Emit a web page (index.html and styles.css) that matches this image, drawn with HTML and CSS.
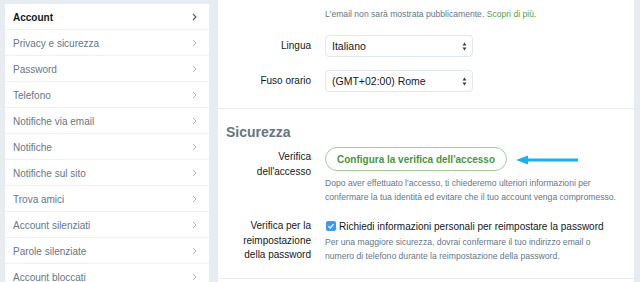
FILE: index.html
```html
<!DOCTYPE html>
<html lang="it">
<head>
    <meta charset="UTF-8">
    <meta name="viewport" content="width=device-width, initial-scale=1.0">
    <title>Impostazioni account</title>
    <link rel="stylesheet" href="styles.css">
</head>
<body>
    <div class="page">
        <nav class="menu">
            <a class="menu-item active" href="#">Account <svg class="chev" width="5" height="8" viewBox="0 0 5 8"><path d="M1 1l3 3-3 3" fill="none" stroke="currentColor" stroke-width="1.1"/></svg></a>
            <a class="menu-item" href="#">Privacy e sicurezza <svg class="chev" width="5" height="8" viewBox="0 0 5 8"><path d="M1 1l3 3-3 3" fill="none" stroke="currentColor" stroke-width="0.9"/></svg></a>
            <a class="menu-item" href="#">Password <svg class="chev" width="5" height="8" viewBox="0 0 5 8"><path d="M1 1l3 3-3 3" fill="none" stroke="currentColor" stroke-width="0.9"/></svg></a>
            <a class="menu-item" href="#">Telefono <svg class="chev" width="5" height="8" viewBox="0 0 5 8"><path d="M1 1l3 3-3 3" fill="none" stroke="currentColor" stroke-width="0.9"/></svg></a>
            <a class="menu-item" href="#">Notifiche via email <svg class="chev" width="5" height="8" viewBox="0 0 5 8"><path d="M1 1l3 3-3 3" fill="none" stroke="currentColor" stroke-width="0.9"/></svg></a>
            <a class="menu-item" href="#">Notifiche <svg class="chev" width="5" height="8" viewBox="0 0 5 8"><path d="M1 1l3 3-3 3" fill="none" stroke="currentColor" stroke-width="0.9"/></svg></a>
            <a class="menu-item" href="#">Notifiche sul sito <svg class="chev" width="5" height="8" viewBox="0 0 5 8"><path d="M1 1l3 3-3 3" fill="none" stroke="currentColor" stroke-width="0.9"/></svg></a>
            <a class="menu-item" href="#">Trova amici <svg class="chev" width="5" height="8" viewBox="0 0 5 8"><path d="M1 1l3 3-3 3" fill="none" stroke="currentColor" stroke-width="0.9"/></svg></a>
            <a class="menu-item" href="#">Account silenziati <svg class="chev" width="5" height="8" viewBox="0 0 5 8"><path d="M1 1l3 3-3 3" fill="none" stroke="currentColor" stroke-width="0.9"/></svg></a>
            <a class="menu-item" href="#">Parole silenziate <svg class="chev" width="5" height="8" viewBox="0 0 5 8"><path d="M1 1l3 3-3 3" fill="none" stroke="currentColor" stroke-width="0.9"/></svg></a>
            <a class="menu-item" href="#">Account bloccati <svg class="chev" width="5" height="8" viewBox="0 0 5 8"><path d="M1 1l3 3-3 3" fill="none" stroke="currentColor" stroke-width="0.9"/></svg></a>
        </nav>

        <main class="panel">
            <section class="section first">
                <div class="row">
                    <div></div>
                    <p class="note">L'email non sarà mostrata pubblicamente. <a href="#">Scopri di più.</a></p>
                </div>
                <div class="row middle lang">
                    <label class="label">Lingua</label>
                    <div class="select"><span>Italiano</span>
                        <svg width="5" height="9" viewBox="0 0 5 9"><path d="M2.5 0.5L4.5 3.5H0.5z M2.5 8.5L4.5 5.5H0.5z" fill="#3c3c3c"/></svg>
                    </div>
                </div>
                <div class="row middle zone">
                    <label class="label">Fuso orario</label>
                    <div class="select"><span>(GMT+02:00) Rome</span>
                        <svg width="5" height="9" viewBox="0 0 5 9"><path d="M2.5 0.5L4.5 3.5H0.5z M2.5 8.5L4.5 5.5H0.5z" fill="#3c3c3c"/></svg>
                    </div>
                </div>
            </section>

            <section class="section security">
                <h2>Sicurezza</h2>
                <div class="row">
                    <label class="label top">Verifica<br>dell'accesso</label>
                    <div>
                        <div class="btn-line">
                            <button class="btn-outline">Configura la verifica dell'accesso</button>
                            <svg class="arrow" width="62" height="10" viewBox="0 0 62 10"><path d="M0 5L12 0.5V3.6H62V6.4H12V9.5z" fill="#1cb0ee"/></svg>
                        </div>
                        <p class="help">Dopo aver effettuato l'accesso, ti chiederemo ulteriori informazioni per<br>confermare la tua identità ed evitare che il tuo account venga compromesso.</p>
                    </div>
                </div>
                <div class="row reset">
                    <label class="label">Verifica per la<br>reimpostazione<br>della password</label>
                    <div>
                        <div class="check-line">
                            <span class="check"><svg width="10" height="10" viewBox="0 0 10 10"><path d="M2.6 5.2l1.7 1.7 3.3-3.8" fill="none" stroke="#fff" stroke-width="1.4"/></svg></span>
                            <span>Richiedi informazioni personali per reimpostare la password</span>
                        </div>
                        <p class="help small">Per una maggiore sicurezza, dovrai confermare il tuo indirizzo email o<br>numero di telefono durante la reimpostazione della password.</p>
                    </div>
                </div>
            </section>

            <section class="section rest"></section>
        </main>
    </div>
</body>
</html>
```

FILE: styles.css
```css
body {
    margin: 0;
    background: #e6ecf0;
    font-family: "Liberation Sans", Arial, sans-serif;
    overflow: hidden;
}
.page {
    display: flex;
    align-items: flex-start;
    gap: 9px;
    padding-left: 5px;
}

/* left menu */
.menu {
    width: 204px;
    margin-top: 4px;
    background: #fff;
}
.menu-item {
    display: flex;
    justify-content: space-between;
    align-items: center;
    box-sizing: border-box;
    height: 26px;
    padding: 1px 12px 0 8px;
    border-bottom: 1px solid #eef1f4;
    font-size: 10px;
    color: #657786;
    text-decoration: none;
}
.menu-item .chev { color: #a3adb6; }
.menu-item.active { color: #14171a; font-weight: bold; }
.menu-item.active .chev { color: #4a5560; }

/* main panel */
.panel {
    width: 416px;
    background: #fff;
}
.section + .section { border-top: 1px solid #e6ecf0; }
.section.first { padding: 7px 0 16px; }
.section.security { padding: 15px 0 15px; }
.section.rest { height: 40px; }

.row {
    display: grid;
    grid-template-columns: 93px 1fr;
    column-gap: 14px;
}
.row.middle { align-items: center; }
.row.lang { margin-top: 14px; }
.row.zone { margin-top: 13px; }
.row.reset { margin-top: 15px; }

.label {
    text-align: right;
    font-size: 10px;
    line-height: 14.5px;
    color: #14171a;
}
.label.top { padding-top: 3px; }

.note {
    margin: 0;
    font-size: 8.6px;
    line-height: 14px;
    color: #657786;
}
.note a { color: #5a9f4c; text-decoration: none; }

.select {
    display: flex;
    justify-content: space-between;
    align-items: center;
    box-sizing: border-box;
    width: 148px;
    height: 22px;
    padding: 0 5px 0 6px;
    border: 1px solid #e1e8ed;
    border-radius: 4px;
    font-size: 10.5px;
    color: #14171a;
}

h2 {
    margin: 0 0 6px 8px;
    font-size: 14px;
    line-height: 17px;
    color: #66757f;
}

.btn-line {
    display: flex;
    align-items: center;
    gap: 9px;
}
.btn-outline {
    box-sizing: border-box;
    height: 24px;
    padding: 0 11px;
    border: 1px solid #9fcd93;
    border-radius: 999px;
    background: #fff;
    font-family: inherit;
    font-size: 10px;
    font-weight: bold;
    color: #4a963c;
}
.arrow { margin-top: 1px; }

.help {
    margin: 5px 0 0;
    font-size: 8.6px;
    line-height: 14px;
    color: #657786;
}
.help.small { margin-top: 2px; }

.check-line {
    display: flex;
    align-items: center;
    gap: 3px;
    height: 14px;
    font-size: 10px;
    color: #14171a;
}
.check {
    display: flex;
    width: 10px;
    height: 10px;
    margin-left: 1px;
    border-radius: 2px;
    background: #3b99fc;
}
```
